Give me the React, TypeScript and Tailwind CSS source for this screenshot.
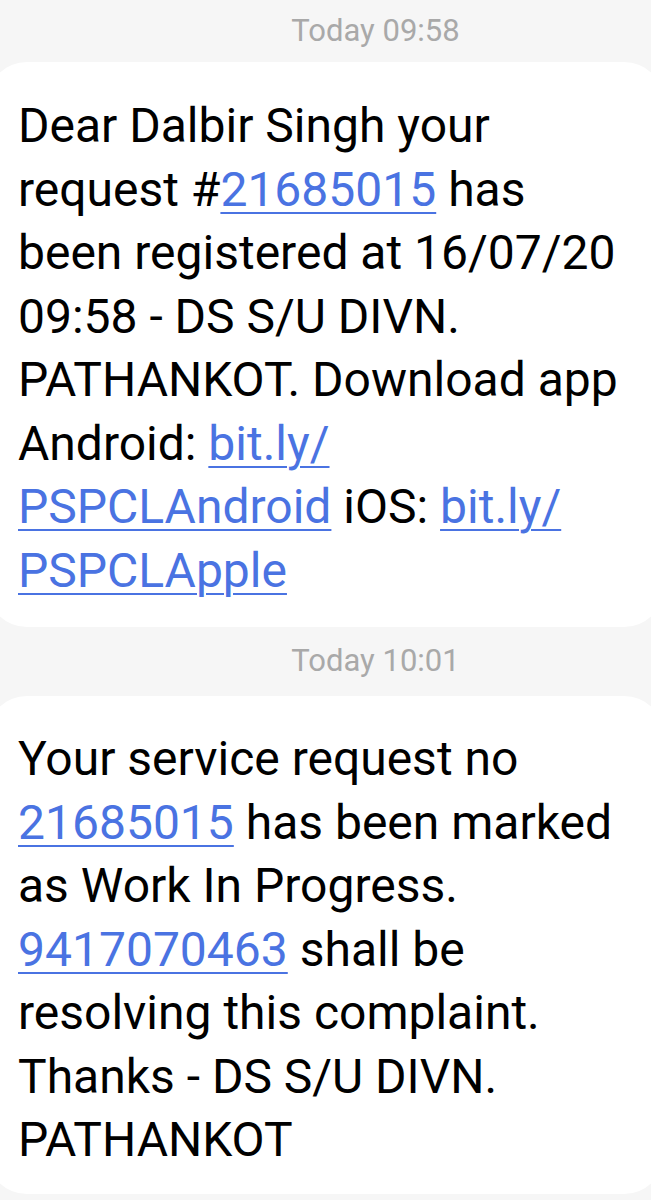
import React from 'react';

type Part = string | { link: string };

const MESSAGES: { time: string; lines: Part[][] }[] = [
  {
    time: 'Today 09:58',
    lines: [
      ['Dear Dalbir Singh your'],
      ['request #', { link: '21685015' }, ' has'],
      ['been registered at 16/07/20'],
      ['09:58 - DS S/U DIVN.'],
      ['PATHANKOT. Download app'],
      ['Android: ', { link: 'bit.ly/' }],
      [{ link: 'PSPCLAndroid' }, ' iOS: ', { link: 'bit.ly/' }],
      [{ link: 'PSPCLApple' }],
    ],
  },
  {
    time: 'Today 10:01',
    lines: [
      ['Your service request no'],
      [{ link: '21685015' }, ' has been marked'],
      ['as Work In Progress.'],
      [{ link: '9417070463' }, ' shall be'],
      ['resolving this complaint.'],
      ['Thanks - DS S/U DIVN.'],
      ['PATHANKOT'],
    ],
  },
];

function Line({ parts }: { parts: Part[] }) {
  return (
    <div className="whitespace-pre">
      {parts.map((p, i) =>
        typeof p === 'string' ? (
          <span key={i}>{p}</span>
        ) : (
          <span
            key={i}
            className="text-[#4a73e2] underline decoration-2 underline-offset-[6px]"
          >
            {p.link}
          </span>
        )
      )}
    </div>
  );
}

export default function App() {
  return (
    <div
      className="w-[651px] h-[1200px] overflow-hidden bg-[#f6f6f6]"
      style={{ fontFamily: 'Roboto, "Noto Sans", sans-serif' }}
    >
      {MESSAGES.map((m, idx) => (
        <div key={m.time}>
          <div
            className={`flex items-center justify-center pl-[100px] text-[31px] text-[#a9a9a9] ${
              idx === 0 ? 'h-[62px]' : 'h-[69px]'
            }`}
          >
            {m.time}
          </div>
          <div
            className={`-mx-[13px] rounded-[40px] bg-white pl-[31px] text-[48px] leading-[63.5px] text-black ${
              idx === 0 ? 'pt-[32px] pb-[25px]' : 'pt-[31px] pb-[22px]'
            }`}
          >
            {m.lines.map((l, i) => (
              <Line key={i} parts={l} />
            ))}
          </div>
        </div>
      ))}
    </div>
  );
}
